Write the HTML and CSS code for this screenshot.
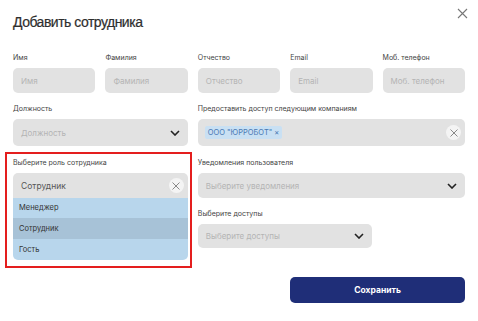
FILE: index.html
```html
<!DOCTYPE html>
<html lang="ru">
<head>
    <meta charset="UTF-8">
    <meta name="viewport" content="width=device-width, initial-scale=1.0">
    <title>Добавить сотрудника</title>
    <link rel="stylesheet" href="styles.css">
</head>
<body>

<div class="modal">
    <div class="modal-head">
        <h2>Добавить сотрудника</h2>
        <button class="close-btn" aria-label="Закрыть">
            <svg width="11" height="11" viewBox="0 0 11 11"><path d="M1 1L10 10M10 1L1 10" stroke="#777" stroke-width="1.1" fill="none"/></svg>
        </button>
    </div>

    <div class="grid">
        <div class="field">
            <label>Имя</label>
            <div class="input placeholder">Имя</div>
        </div>
        <div class="field">
            <label>Фамилия</label>
            <div class="input placeholder">Фамилия</div>
        </div>
        <div class="field">
            <label>Отчество</label>
            <div class="input placeholder">Отчество</div>
        </div>
        <div class="field">
            <label>Email</label>
            <div class="input placeholder">Email</div>
        </div>
        <div class="field">
            <label>Моб. телефон</label>
            <div class="input placeholder">Моб. телефон</div>
        </div>

        <div class="field span-2 row-2">
            <label>Должность</label>
            <div class="select tall">
                <span class="placeholder">Должность</span>
                <svg class="chevron" width="10" height="6" viewBox="0 0 10 6"><path d="M1 1L5 5L9 1" stroke="#222" stroke-width="1.6" fill="none"/></svg>
            </div>
        </div>
        <div class="field span-3 row-2">
            <label>Предоставить доступ следующим компаниям</label>
            <div class="select tall">
                <span class="chip">ООО "ЮРРОБОТ" ×</span>
                <span class="clear"><svg width="8" height="8" viewBox="0 0 8 8"><path d="M0.5 0.5L7.5 7.5M7.5 0.5L0.5 7.5" stroke="#888" stroke-width="1" fill="none"/></svg></span>
            </div>
        </div>

        <div class="role-box span-2">
            <div class="field">
                <label>Выберите роль сотрудника</label>
                <div class="select open">
                    <span class="value">Сотрудник</span>
                    <span class="clear"><svg width="8" height="8" viewBox="0 0 8 8"><path d="M0.5 0.5L7.5 7.5M7.5 0.5L0.5 7.5" stroke="#888" stroke-width="1" fill="none"/></svg></span>
                </div>
                <ul class="options">
                    <li>Менеджер</li>
                    <li class="selected">Сотрудник</li>
                    <li>Гость</li>
                </ul>
            </div>
        </div>
        <div class="right-col span-3">
            <div class="field">
                <label>Уведомления пользователя</label>
                <div class="select">
                    <span class="placeholder">Выберите уведомления</span>
                    <svg class="chevron" width="10" height="6" viewBox="0 0 10 6"><path d="M1 1L5 5L9 1" stroke="#222" stroke-width="1.6" fill="none"/></svg>
                </div>
            </div>
            <div class="field access">
                <label>Выберите доступы</label>
                <div class="select short">
                    <span class="placeholder">Выберите доступы</span>
                    <svg class="chevron" width="10" height="6" viewBox="0 0 10 6"><path d="M1 1L5 5L9 1" stroke="#222" stroke-width="1.6" fill="none"/></svg>
                </div>
            </div>
        </div>

        <button class="save-btn">Сохранить</button>
    </div>
</div>

</body>
</html>
```

FILE: styles.css
```css
* { box-sizing: border-box; }
body { margin: 0; font-family: 'Inter', 'Noto Sans', sans-serif; background: #fff; }
.modal { width: 478px; height: 321px; background: #fff; padding: 12px 13px 0 13px; overflow: hidden; }
.modal-head { display: flex; justify-content: space-between; align-items: flex-start; }
h2 { margin: 0; font-family: 'Liberation Sans', Arial, sans-serif; font-size: 14px; line-height: 20px; font-weight: 400; color: #2e2e2e; letter-spacing: -0.5px; -webkit-text-stroke: 0.2px #2e2e2e; }
.close-btn { border: none; background: transparent; padding: 0; margin: -5px -3px 0 0; cursor: pointer; }
.grid { display: grid; grid-template-columns: repeat(5, 1fr); column-gap: 10px; margin-top: 21px; align-items: start; }
.span-2 { grid-column: span 2; }
.span-3 { grid-column: span 3; }
.field { display: flex; flex-direction: column; }
.field label { font-size: 7px; line-height: 10px; color: #444; margin-bottom: 5px; }
.input, .select { background: #e2e2e2; border-radius: 5px; height: 25px; font-size: 8px; display: flex; align-items: center; padding: 0 8px; }
.placeholder { color: #b4b4b4; }
.select { justify-content: space-between; }
.select.tall { height: 27px; }
.select.short { width: 174px; height: 24px; }
.row-2 { margin-top: 11px; }
.chevron { flex: none; }
.chip { background: #c9e0f3; color: #4a79b4; font-size: 7.5px; padding: 2px 3px; border-radius: 2px; line-height: 9px; margin-left: -1px; }
.clear { width: 15px; height: 15px; border-radius: 50%; background: #f4f4f4; display: flex; align-items: center; justify-content: center; margin-right: -4px; }
.value { color: #555; font-size: 8.5px; }
.role-box { margin: 6px -4px 0 -8px; border: 2px solid #e41e1e; padding: 4px 2px 6px 6px; }
.select.open { border-radius: 5px 5px 0 0; height: 25px; }
.options { list-style: none; margin: 0; padding: 0; background: #b8d6ec; border-radius: 0 0 5px 5px; overflow: hidden; }
.options li { height: 21px; line-height: 21px; padding: 0 6px; font-size: 7.5px; color: #333; }
.options li:first-child { height: 20px; line-height: 20px; }
.options li.selected { background: #a7c2d7; }
.right-col { margin-top: 12px; }
.access { margin-top: 11px; }
.save-btn { grid-column: 4 / span 2; margin-top: 9px; height: 26px; border: none; border-radius: 5px; background: #1f2e78; color: #fff; font-family: inherit; font-size: 8.5px; font-weight: 700; cursor: pointer; }
```
